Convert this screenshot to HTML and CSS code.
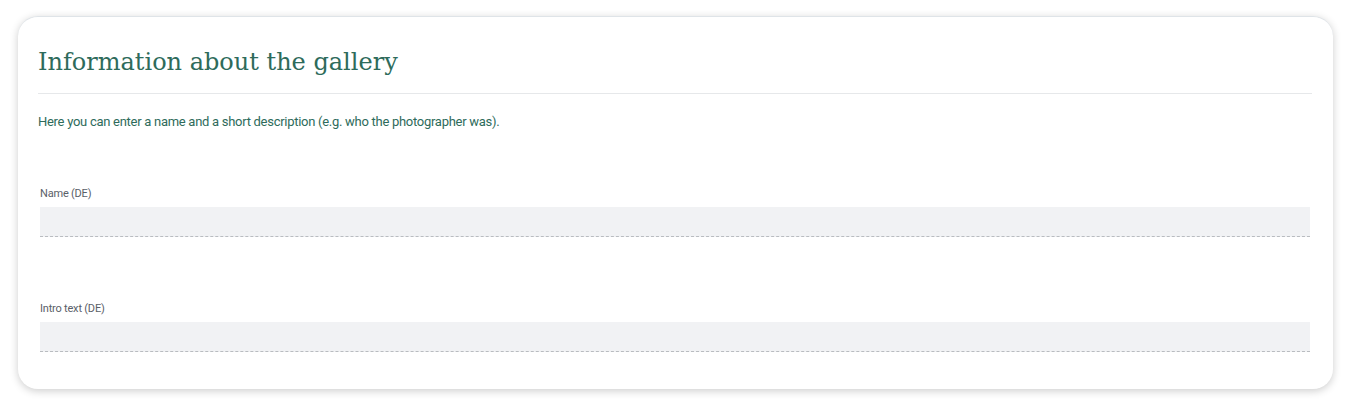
FILE: index.html
```html
<!DOCTYPE html>
<html>
<head>
<meta charset="utf-8">
<link rel="stylesheet" href="styles.css">
</head>
<body>
<div class="page">
  <section class="card">
    <h1 class="title">Information about the gallery</h1>
    <p class="intro">Here you can enter a name and a short description (e.g. who the photographer was).</p>
    <div class="field">
      <label class="label">Name (DE)</label>
      <div class="input"></div>
    </div>
    <div class="field">
      <label class="label">Intro text (DE)</label>
      <div class="input"></div>
    </div>
  </section>
</div>
</body>
</html>
```
FILE: styles.css
```css
html, body { margin: 0; padding: 0; background: #fff; }
.page { padding: 16px 16px 18px 18px; }
.card {
  width: 1315px;
  box-sizing: border-box;
  height: 373px;
  background: #fff;
  border-radius: 20px;
  border-top: 1px solid #dfe4e8;
  box-shadow: 0 2px 9px rgba(0,0,0,0.2);
  padding: 25px 21px 0 20px;
}
.title {
  margin: 0;
  font-family: "DejaVu Serif", serif;
  font-weight: normal;
  font-size: 24px;
  line-height: 40px;
  color: #2e6b5b;
  padding-bottom: 11px;
  border-bottom: 1px solid #e6e8ea;
}
.intro {
  margin: 20px 0 0;
  font-family: "Roboto", sans-serif;
  font-size: 13px;
  letter-spacing: -0.28px;
  line-height: 16px;
  color: #2e6b5b;
}
.field { padding: 0 2px 0 2px; margin-top: 57px; }
.field + .field { margin-top: 65px; }
.label {
  display: block;
  font-family: "Roboto", sans-serif;
  font-size: 11px;
  letter-spacing: -0.2px;
  line-height: 14px;
  color: #5a6068;
  margin-bottom: 6px;
}
.input {
  height: 29px;
  background: #f1f2f4;
  border-bottom: 1px dashed #b9bcc0;
}
```
